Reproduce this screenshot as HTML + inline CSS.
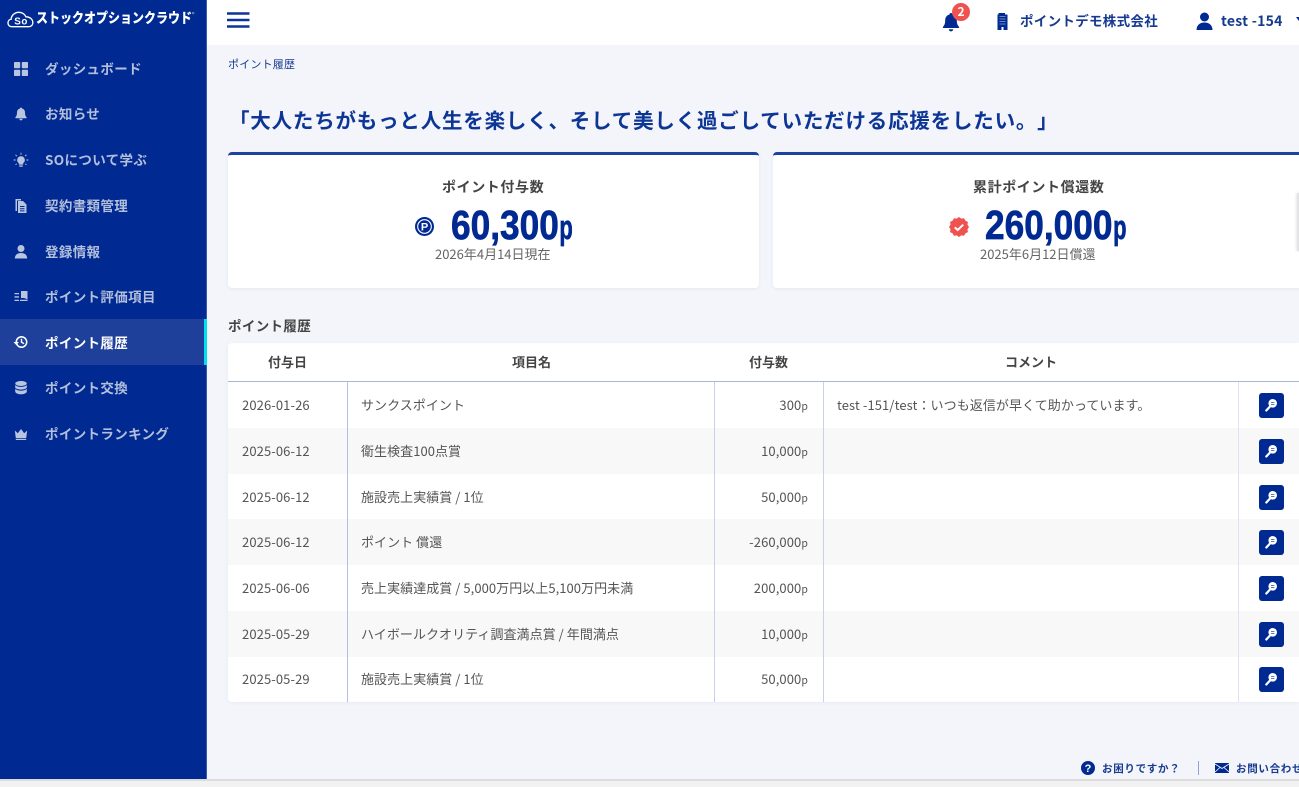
<!DOCTYPE html>
<html lang="ja"><head><meta charset="utf-8"><title>ポイント履歴</title>
<style>
*{box-sizing:border-box}
html,body{margin:0;padding:0;width:1299px;height:787px;overflow:hidden;background:#f3f5fb;font-family:"Noto Sans CJK JP","Liberation Sans",sans-serif;color:#444;text-spacing-trim:space-all}
.a{position:absolute;white-space:nowrap}
#side{position:absolute;left:0;top:0;width:207px;height:779px;background:#002a92;border-right:1px solid #3a5cb0}
.mi{position:absolute;left:0;width:207px;height:46px}
.mi span{position:absolute;left:45px;top:12px;font-size:13.5px;line-height:20px;letter-spacing:.35px;font-weight:700;color:#b4bfdc;white-space:nowrap}
.mi svg{position:absolute;left:13px;top:15px;width:16px;height:16px;fill:#b9c4df}
.mi.on{background:#1e409a}
.mi.on span{color:#fff;top:13px}
.mi.on svg{fill:#fff}
.mi.on i{position:absolute;right:0;top:0;width:3px;height:46px;background:#00e0f0}
.card{position:absolute;top:152px;height:136px;background:#fff;border-top:3px solid #1d429f;border-radius:4px;box-shadow:0 1px 3px rgba(40,60,120,.07)}
.ct{font-size:14px;font-weight:700;letter-spacing:.6px;color:#444;line-height:20px}
.big{font-family:"Liberation Sans",sans-serif;font-weight:700;color:#002a92;font-size:41px;line-height:46px;transform:scaleX(.86);transform-origin:0 0;-webkit-text-stroke:.7px #002a92}
.big span{display:inline-block;font-size:34px;transform:scaleX(.75);transform-origin:0 100%;margin-left:1px}
.sm{font-size:13px;color:#666;letter-spacing:0;line-height:18px}
#tb{position:absolute;left:228px;top:343px;width:1071px;height:359px;background:#fff;border-radius:4px 0 0 4px;box-shadow:0 1px 3px rgba(40,60,120,.06)}
.rw{position:absolute;left:0;width:1071px;height:46px}
.rw.alt{background:#f8f8f9}
.rw span{position:absolute;top:13px;font-size:13px;line-height:20px;color:#555;letter-spacing:.1px;white-space:nowrap}
.rw span.n{left:133px;letter-spacing:.05px}
.th{position:absolute;top:9px;font-size:13px;font-weight:700;color:#444;letter-spacing:0;line-height:20px;white-space:nowrap}
.vl{position:absolute;top:39px;width:1px;height:320px}
.btn{position:absolute;left:1031px;top:11px;width:25px;height:25px;background:#002a92;border-radius:3px}
.btn svg{position:absolute;left:4px;top:4px;width:17px;height:17px}
.r{text-align:right;width:80px;left:500px}
.r small{font-size:10.5px}
</style></head><body>

<div id="side">
<svg class="a" style="left:7px;top:11px" width="27" height="17" viewBox="0 0 30 19"><path d="M5 17.500C2.500 17.500 1 15.500 1 13.300 1 11 2.600 9.400 4.500 9.200 4.700 5.500 7.500 2 12.500 1.500 16.500 1.300 19.800 3.300 21 6.500 25 6.300 28.500 9 28.800 12.500 29 15.500 27 17.500 24.500 17.500Z" fill="none" stroke="#fff" stroke-width="1.500"/><text x="8" y="15" font-family="Liberation Sans" font-size="11" font-weight="700" fill="#fff" letter-spacing=".6">So</text></svg>
<div class="a" style="left:36px;top:8px;font-size:14px;line-height:20px;font-weight:900;color:#fff;transform:scaleX(.857);transform-origin:0 0">ストックオプションクラウド</div>
<div class="a" style="left:192px;top:12px;font-size:5px;line-height:6px;color:#cfd6ea">®</div>

<div class="mi" style="top:46px"><svg viewBox="0 0 16 16"><rect x="1" y="1" width="6.200" height="6.200" rx=".8"/><rect x="8.800" y="1" width="6.200" height="6.200" rx=".8"/><rect x="1" y="8.800" width="6.200" height="6.200" rx=".8"/><rect x="8.800" y="8.800" width="6.200" height="6.200" rx=".8"/></svg><span>ダッシュボード</span></div>
<div class="mi" style="top:91px"><svg viewBox="0 0 16 16"><path d="M8 1.500c.6 0 1 .4 1 1 2 .5 3 2 3 4 0 2.500.6 3.800 1.600 4.800.3.400 0 .9-.4.900H2.800c-.5 0-.7-.5-.4-.9C3.400 10.300 4 9 4 6.500c0-2 1-3.500 3-4 0-.6.400-1 1-1zM6.400 12.800h3.200A1.600 1.600 0 0 1 6.400 12.800z"/></svg><span>お知らせ</span></div>
<div class="mi" style="top:137px"><svg viewBox="0 0 16 16"><path d="M8 4.200a3.800 3.800 0 0 0-2.200 6.900v1.500h4.400v-1.500A3.800 3.800 0 0 0 8 4.200zM6.300 13.400h3.400v1.400H6.300z"/><path d="M8 .8v2M2.500 2.800l1.400 1.400M13.500 2.800l-1.400 1.400M.6 8h2M13.400 8h2M2.500 12.800l1.300-1M13.500 12.800l-1.300-1" stroke="#b9c4df" stroke-width=".9"/></svg><span>SOについて学ぶ</span></div>
<div class="mi" style="top:183px"><svg viewBox="0 0 16 16"><path d="M2.500 1H8v1.500H4V13H2.500z"/><path d="M5 3h5l3.500 3.500V15H5zM7 8v1h4.500V8zM7 10.200v1h4.500v-1zM7 12.400v1h4.500v-1z" fill-rule="evenodd"/></svg><span>契約書類管理</span></div>
<div class="mi" style="top:229px"><svg viewBox="0 0 16 16"><circle cx="8" cy="4.500" r="3.500"/><path d="M1.800 14.500c0-3.500 2.500-5.500 6.200-5.500s6.200 2 6.200 5.500z"/></svg><span>登録情報</span></div>
<div class="mi" style="top:274px"><svg viewBox="0 0 16 16"><path d="M8 2h6.500v8.500L11.200 9H8zM1.500 4H6v1.300H1.500zM1.500 7.300H6v1.300H1.500zM1.500 10.700H6V12H1.500zM7 10.700h7.500V12H7z"/></svg><span>ポイント評価項目</span></div>
<div class="mi on" style="top:319px"><svg viewBox="0 0 16 16"><path d="M8.500 2a6 6 0 1 1-5.600 8.200l1.500-.6A4.400 4.400 0 1 0 4.100 8H6L3.200 11 .5 8h2A6 6 0 0 1 8.500 2z"/><path d="M7.800 4.800h1.400v3l2.200 1.300-.7 1.200-2.900-1.700z"/></svg><span>ポイント履歴</span><i></i></div>
<div class="mi" style="top:365px"><svg viewBox="0 0 16 16"><ellipse cx="8" cy="3.500" rx="5.800" ry="2.500"/><path d="M2.200 5v2.300C2.200 8.600 4.800 9.600 8 9.600s5.800-1 5.800-2.300V5c-1 1.200-3.200 1.900-5.800 1.900S3.200 6.200 2.200 5zM2.200 8.800v2.700C2.200 13 4.800 14.300 8 14.300s5.800-1.300 5.800-2.800V8.800c-1 1.200-3.200 1.900-5.800 1.900S3.200 10 2.200 8.800z"/></svg><span>ポイント交換</span></div>
<div class="mi" style="top:411px"><svg viewBox="0 0 16 16"><path d="M1.800 4.500l3 2.800L8 3l3.200 4.300 3-2.800-1 7.500H2.800zM2.800 12.700h10.400V14H2.800z"/></svg><span>ポイントランキング</span></div>
</div>

<div class="a" style="left:207px;top:0;width:1092px;height:45px;background:#fff"></div>
<svg class="a" style="left:227px;top:12px" width="23" height="17"><path d="M0 1.500h22.500M0 8h22.500M0 14.500h22.500" stroke="#0c3596" stroke-width="2.600"/></svg>

<svg class="a" style="left:941px;top:12px" width="20" height="20" viewBox="0 0 20 20"><path d="M10 1c1 0 1.500.6 1.500 1.500 2.800.7 4.300 3 4.300 5.700 0 3.600.8 5 2.200 6.500.4.500.1 1.300-.6 1.300H2.600c-.7 0-1-.8-.6-1.300C3.400 13.200 4.200 11.800 4.200 8.200c0-2.700 1.500-5 4.300-5.700C8.500 1.600 9 1 10 1zM7.800 17.200h4.400a2.200 2.200 0 0 1-4.400 0z" fill="#002a92"/></svg>
<div class="a" style="left:952px;top:3px;width:18px;height:18px;border-radius:50%;background:#ef5350;color:#fff;font-size:12px;font-weight:700;text-align:center;line-height:18px">2</div>
<svg class="a" style="left:997px;top:13px" width="11" height="17" viewBox="0 0 11 17"><path d="M1.500 0H8v1.500h2.500V17H6.500v-3h-2v3H.5V1.500h1z" fill="#002a92"/><path d="M2.500 3.500h6M2.500 6h6M2.500 8.500h6M2.500 11h6" stroke="#8fa2d0" stroke-width=".7"/></svg>
<div class="a" style="left:1020px;top:10px;font-size:13.5px;font-weight:700;line-height:20px;letter-spacing:.3px;color:#163a8f">ポイントデモ株式会社</div>
<svg class="a" style="left:1196px;top:12px" width="17" height="18" viewBox="0 0 17 18"><circle cx="8.500" cy="5" r="4.500" fill="#002a92"/><path d="M.5 18c0-4.600 3.200-7.500 8-7.500s8 2.900 8 7.500z" fill="#002a92"/></svg>
<div class="a" style="left:1221px;top:11px;font-size:14px;font-weight:700;line-height:20px;letter-spacing:.25px;color:#163a8f">test -154</div>
<svg class="a" style="left:1296px;top:17px" width="3" height="6"><path d="M0 0h3v4z" fill="#002a92"/></svg>

<div class="a" style="left:228px;top:56px;font-size:11px;line-height:16px;letter-spacing:.2px;color:#163a8f">ポイント履歴</div>
<div class="a" style="left:229px;top:104px;font-size:20.5px;font-weight:700;line-height:30px;letter-spacing:.8px;color:#0c3596">「大人たちがもっと人生を楽しく、そして美しく過ごしていただける応援をしたい。」</div>

<div class="card" style="left:228px;width:531px"></div>
<div class="card" style="left:773px;width:540px"></div>

<div class="a ct" style="left:442px;top:177px">ポイント付与数</div>
<svg class="a" style="left:415px;top:217px" width="19" height="19" viewBox="0 0 19 19"><circle cx="9.500" cy="9.500" r="9.500" fill="#002a92"/><circle cx="9.500" cy="9.500" r="6.800" fill="none" stroke="#fff" stroke-width="1.100"/><text x="9.500" y="13.300" text-anchor="middle" font-family="Liberation Sans" font-size="11" font-weight="700" fill="#fff">P</text></svg>
<div class="a big" style="left:451px;top:202px">60,300<span>p</span></div>
<div class="a sm" style="left:435px;top:245px">2026年4月14日現在</div>

<div class="a ct" style="left:973px;top:177px">累計ポイント償還数</div>
<svg class="a" style="left:949px;top:217px" width="20" height="20" viewBox="0 0 20 20"><path d="M10 0l2.300 1.600 2.800-.4 1.300 2.400 2.500 1.300-.4 2.800L20 10l-1.500 2.300.4 2.800-2.500 1.300-1.300 2.400-2.800-.4L10 20l-2.300-1.600-2.800.4-1.300-2.400-2.500-1.300.4-2.800L0 10l1.500-2.300-.4-2.800 2.500-1.300 1.300-2.400 2.800.4z" fill="#ef5350"/><path d="M5.800 10.300l2.900 2.700 5.500-5.300" fill="none" stroke="#fff" stroke-width="2"/></svg>
<div class="a big" style="left:985px;top:202px">260,000<span>p</span></div>
<div class="a sm" style="left:980px;top:245px">2025年6月12日償還</div>
<div class="a" style="left:1297px;top:193px;width:2px;height:58px;background:#e4e4e6;box-shadow:0 0 3px rgba(0,0,0,.2)"></div>

<div class="a" style="left:228px;top:315px;font-size:13.5px;font-weight:700;line-height:20px;letter-spacing:.35px;color:#444">ポイント履歴</div>

<div id="tb">
<div class="th" style="left:40px">付与日</div>
<div class="th" style="left:284px">項目名</div>
<div class="th" style="left:521px">付与数</div>
<div class="th" style="left:777px">コメント</div>
<div class="a" style="left:0;top:38px;width:1071px;height:1px;background:#a9b7dd"></div>

<div class="rw" style="top:39px"><span style="left:14px">2026-01-26</span><span class="n">サンクスポイント</span><span class="r">300<small>p</small></span><span style="left:609px;letter-spacing:.07px">test -151/test：いつも返信が早くて助かっています。</span><div class="btn"><svg viewBox="0 0 17 17"><circle cx="9.700" cy="6.300" r="4.300" fill="#fff"/><path d="M7 9.500L3.300 13.500" stroke="#fff" stroke-width="2.200" stroke-linecap="round"/><path d="M8 5.300h3.400M8 7.300h3.400" stroke="#002a92" stroke-width=".7"/></svg></div></div>
<div class="rw alt" style="top:85px"><span style="left:14px">2025-06-12</span><span class="n">衛生検査100点賞</span><span class="r">10,000<small>p</small></span><div class="btn"><svg viewBox="0 0 17 17"><circle cx="9.700" cy="6.300" r="4.300" fill="#fff"/><path d="M7 9.500L3.300 13.500" stroke="#fff" stroke-width="2.200" stroke-linecap="round"/><path d="M8 5.300h3.400M8 7.300h3.400" stroke="#002a92" stroke-width=".7"/></svg></div></div>
<div class="rw" style="top:131px"><span style="left:14px">2025-06-12</span><span class="n">施設売上実績賞 / 1位</span><span class="r">50,000<small>p</small></span><div class="btn"><svg viewBox="0 0 17 17"><circle cx="9.700" cy="6.300" r="4.300" fill="#fff"/><path d="M7 9.500L3.300 13.500" stroke="#fff" stroke-width="2.200" stroke-linecap="round"/><path d="M8 5.300h3.400M8 7.300h3.400" stroke="#002a92" stroke-width=".7"/></svg></div></div>
<div class="rw alt" style="top:176px"><span style="left:14px">2025-06-12</span><span class="n">ポイント 償還</span><span class="r">-260,000<small>p</small></span><div class="btn"><svg viewBox="0 0 17 17"><circle cx="9.700" cy="6.300" r="4.300" fill="#fff"/><path d="M7 9.500L3.300 13.500" stroke="#fff" stroke-width="2.200" stroke-linecap="round"/><path d="M8 5.300h3.400M8 7.300h3.400" stroke="#002a92" stroke-width=".7"/></svg></div></div>
<div class="rw" style="top:222px"><span style="left:14px">2025-06-06</span><span class="n">売上実績達成賞 / 5,000万円以上5,100万円未満</span><span class="r">200,000<small>p</small></span><div class="btn"><svg viewBox="0 0 17 17"><circle cx="9.700" cy="6.300" r="4.300" fill="#fff"/><path d="M7 9.500L3.300 13.500" stroke="#fff" stroke-width="2.200" stroke-linecap="round"/><path d="M8 5.300h3.400M8 7.300h3.400" stroke="#002a92" stroke-width=".7"/></svg></div></div>
<div class="rw alt" style="top:268px"><span style="left:14px">2025-05-29</span><span class="n">ハイボールクオリティ調査満点賞 / 年間満点</span><span class="r">10,000<small>p</small></span><div class="btn"><svg viewBox="0 0 17 17"><circle cx="9.700" cy="6.300" r="4.300" fill="#fff"/><path d="M7 9.500L3.300 13.500" stroke="#fff" stroke-width="2.200" stroke-linecap="round"/><path d="M8 5.300h3.400M8 7.300h3.400" stroke="#002a92" stroke-width=".7"/></svg></div></div>
<div class="rw" style="top:313px"><span style="left:14px">2025-05-29</span><span class="n">施設売上実績賞 / 1位</span><span class="r">50,000<small>p</small></span><div class="btn"><svg viewBox="0 0 17 17"><circle cx="9.700" cy="6.300" r="4.300" fill="#fff"/><path d="M7 9.500L3.300 13.500" stroke="#fff" stroke-width="2.200" stroke-linecap="round"/><path d="M8 5.300h3.400M8 7.300h3.400" stroke="#002a92" stroke-width=".7"/></svg></div></div>

<div class="vl" style="left:119px;background:#b3bfdf"></div>
<div class="vl" style="left:486px;background:#c8d1ea"></div>
<div class="vl" style="left:595px;background:#c8d1ea"></div>
<div class="vl" style="left:1010px;background:#dfe3f1"></div>
</div>

<svg class="a" style="left:1081px;top:761px" width="14" height="14" viewBox="0 0 14 14"><circle cx="7" cy="7" r="7" fill="#002a92"/><text x="7" y="11" text-anchor="middle" font-family="Liberation Sans" font-size="11" font-weight="700" fill="#fff">?</text></svg>
<div class="a" style="left:1102px;top:761px;font-size:10.5px;font-weight:700;line-height:16px;letter-spacing:.7px;color:#163a8f">お困りですか？</div>
<div class="a" style="left:1198px;top:761px;width:1px;height:14px;background:#8fa2d0"></div>
<svg class="a" style="left:1215px;top:763px" width="14" height="10" viewBox="0 0 14 10"><rect width="14" height="10" fill="#002a92"/><path d="M0 1l7 4.500L14 1M0 9l5-4.500M14 9L9 4.500" fill="none" stroke="#fff" stroke-width=".8"/></svg>
<div class="a" style="left:1236px;top:761px;font-size:10.5px;font-weight:700;line-height:16px;letter-spacing:.7px;color:#163a8f">お問い合わせ</div>

<div class="a" style="left:0;top:779px;width:1299px;height:2px;background:#dcdcdc"></div>
<div class="a" style="left:0;top:781px;width:1299px;height:6px;background:#f2f2f2"></div>
</body></html>
